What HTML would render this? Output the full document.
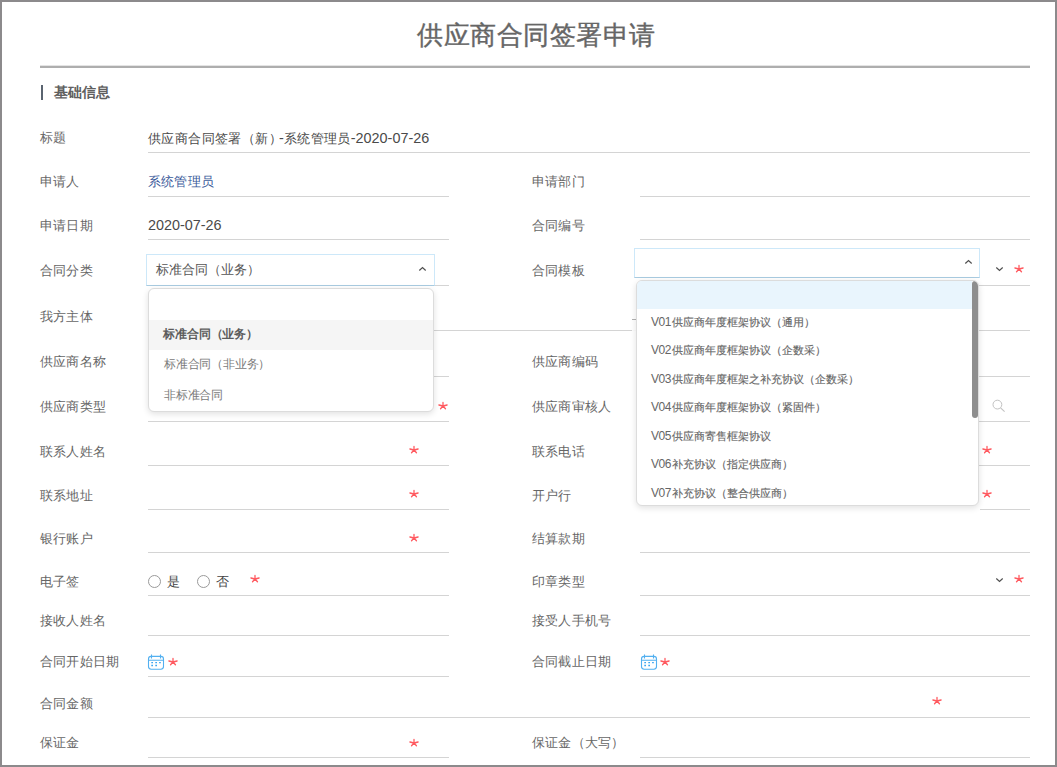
<!DOCTYPE html>
<html><head><meta charset="utf-8">
<style>
*{margin:0;padding:0;box-sizing:border-box}
html,body{width:1057px;height:767px;overflow:hidden;background:#fff;font-family:"Liberation Sans",sans-serif}
#frame{position:absolute;left:0;top:0;width:1057px;height:767px;border:2px solid #8c8a8c;z-index:50;pointer-events:none}
.a{position:absolute;white-space:nowrap}
.title{left:417px;top:18px;font-size:26px;color:#666;line-height:34px;letter-spacing:0.5px;-webkit-text-stroke:0.4px #666}
.hr{position:absolute;left:40px;width:990px;top:66px;height:2px;background:#aeaeae;box-shadow:0 -1px 0 #e4e4e4}
.sec{left:54px;top:83px;font-size:14px;font-weight:bold;color:#606060;line-height:18px}
.bar{position:absolute;left:41px;top:85px;width:2px;height:15px;background:#5a6470}
.lab{font-size:13px;color:#666;line-height:16px;letter-spacing:0.2px}
.val{font-size:13px;letter-spacing:0.4px;color:#4a4a4a;line-height:16px}
.en{font-size:14.4px;letter-spacing:0}
.ln{position:absolute;height:1px;background:#d4d4d4}
.st,.ic{position:absolute;display:block}
.sel{position:absolute;border:1px solid #cde8f9;border-bottom-color:#a9cbe0;background:#fff}
.dd{position:absolute;background:#fff;border:1px solid #dcdcdc;border-radius:6px;box-shadow:0 2px 6px rgba(0,0,0,0.12);overflow:hidden}
.it{position:absolute;white-space:nowrap;font-size:12px;color:#7a7a7a;line-height:14px;letter-spacing:-0.2px}
.it2{position:absolute;white-space:nowrap;font-size:11px;letter-spacing:-0.05px;color:#666;line-height:14px;-webkit-text-stroke:0.15px #666}
.it2 b{font-weight:normal;font-size:12px;letter-spacing:-0.5px;margin-right:1.5px;-webkit-text-stroke:0}
.radio{position:absolute;width:13px;height:13px;border:1px solid #9a9a9a;border-radius:50%}
</style></head><body>
<div id="frame"></div>
<div class="a title">供应商合同签署申请</div>
<div class="hr"></div>
<div class="bar"></div>
<div class="a sec">基础信息</div>
<div class="a lab" style="left:40px;top:130px">标题</div>
<div class="ln" style="left:148px;width:882px;top:152px"></div>
<div class="a lab" style="left:40px;top:174px">申请人</div>
<div class="ln" style="left:148px;width:301px;top:196px"></div>
<div class="a lab" style="left:532px;top:174px">申请部门</div>
<div class="ln" style="left:640px;width:390px;top:196px"></div>
<div class="a lab" style="left:40px;top:218px">申请日期</div>
<div class="ln" style="left:148px;width:301px;top:239px"></div>
<div class="a lab" style="left:532px;top:218px">合同编号</div>
<div class="ln" style="left:640px;width:390px;top:239px"></div>
<div class="a lab" style="left:40px;top:263px">合同分类</div>
<div class="ln" style="left:148px;width:301px;top:285px"></div>
<div class="a lab" style="left:532px;top:263px">合同模板</div>
<div class="ln" style="left:640px;width:390px;top:285px"></div>
<div class="a lab" style="left:40px;top:309px">我方主体</div>
<div class="ln" style="left:148px;width:882px;top:330px"></div>
<div class="a lab" style="left:40px;top:354px">供应商名称</div>
<div class="ln" style="left:148px;width:301px;top:376px"></div>
<div class="a lab" style="left:532px;top:354px">供应商编码</div>
<div class="ln" style="left:640px;width:390px;top:376px"></div>
<div class="a lab" style="left:40px;top:399px">供应商类型</div>
<div class="ln" style="left:148px;width:301px;top:421px"></div>
<div class="a lab" style="left:532px;top:399px">供应商审核人</div>
<div class="ln" style="left:640px;width:390px;top:421px"></div>
<div class="a lab" style="left:40px;top:444px">联系人姓名</div>
<div class="ln" style="left:148px;width:301px;top:465px"></div>
<div class="a lab" style="left:532px;top:444px">联系电话</div>
<div class="ln" style="left:640px;width:390px;top:465px"></div>
<div class="a lab" style="left:40px;top:488px">联系地址</div>
<div class="ln" style="left:148px;width:301px;top:509px"></div>
<div class="a lab" style="left:532px;top:488px">开户行</div>
<div class="ln" style="left:980px;width:50px;top:509px"></div>
<div class="a lab" style="left:40px;top:531px">银行账户</div>
<div class="ln" style="left:148px;width:301px;top:552px"></div>
<div class="a lab" style="left:532px;top:531px">结算款期</div>
<div class="ln" style="left:640px;width:390px;top:552px"></div>
<div class="a lab" style="left:40px;top:574px">电子签</div>
<div class="ln" style="left:148px;width:301px;top:595px"></div>
<div class="a lab" style="left:532px;top:574px">印章类型</div>
<div class="ln" style="left:640px;width:390px;top:595px"></div>
<div class="a lab" style="left:40px;top:613px">接收人姓名</div>
<div class="ln" style="left:148px;width:301px;top:635px"></div>
<div class="a lab" style="left:532px;top:613px">接受人手机号</div>
<div class="ln" style="left:640px;width:390px;top:635px"></div>
<div class="a lab" style="left:40px;top:654px">合同开始日期</div>
<div class="ln" style="left:148px;width:301px;top:676px"></div>
<div class="a lab" style="left:532px;top:654px">合同截止日期</div>
<div class="ln" style="left:640px;width:390px;top:676px"></div>
<div class="a lab" style="left:40px;top:696px">合同金额</div>
<div class="ln" style="left:148px;width:882px;top:717px"></div>
<div class="a lab" style="left:40px;top:735px">保证金</div>
<div class="ln" style="left:148px;width:301px;top:757px"></div>
<div class="a lab" style="left:532px;top:735px">保证金（大写）</div>
<div class="ln" style="left:640px;width:390px;top:757px"></div>
<div class="a val" style="left:148px;top:130px">供应商合同签署（新）<span class="en" style="margin-left:-3px">-</span>系统管理员<span class="en">-2020-07-26</span></div>
<div class="a val" style="left:148px;top:174px;color:#3a5a9a;letter-spacing:0.2px">系统管理员</div>
<div class="a val" style="left:148px;top:217px"><span class="en">2020-07-26</span></div>
<div class="radio" style="left:147.5px;top:574.6px"></div><div class="radio" style="left:197px;top:574.6px"></div>
<div class="a val" style="left:167px;top:574px;color:#444">是</div>
<div class="a val" style="left:216px;top:574px;color:#444">否</div>
<svg class="ic" style="left:147px;top:654px" width="18" height="17" viewBox="0 0 18 17"><rect x="1.5" y="2.4" width="15" height="12.8" rx="2.6" stroke="#52b0f0" stroke-width="1.1" fill="none"/><path d="M1.5 6.2H16.5M4.5 0.6V4.4M13.5 0.6V4.4" stroke="#52b0f0" stroke-width="1.1" fill="none"/><path d="M4.3 8.7h1.7M8.3 8.7h1.7M12.1 8.7h1.7M4.3 11.5h1.7M8.3 11.5h1.7" stroke="#3aa6f0" stroke-width="1.3" fill="none"/></svg><svg class="ic" style="left:640px;top:654px" width="18" height="17" viewBox="0 0 18 17"><rect x="1.5" y="2.4" width="15" height="12.8" rx="2.6" stroke="#52b0f0" stroke-width="1.1" fill="none"/><path d="M1.5 6.2H16.5M4.5 0.6V4.4M13.5 0.6V4.4" stroke="#52b0f0" stroke-width="1.1" fill="none"/><path d="M4.3 8.7h1.7M8.3 8.7h1.7M12.1 8.7h1.7M4.3 11.5h1.7M8.3 11.5h1.7" stroke="#3aa6f0" stroke-width="1.3" fill="none"/></svg>
<svg class="ic" style="left:992px;top:398.5px" width="14" height="14" viewBox="0 0 14 14"><circle cx="5.4" cy="5.6" r="4.4" stroke="#c2c2c2" stroke-width="1" fill="none"/><path d="M8.6 8.8L12.6 12.6" stroke="#c2c2c2" stroke-width="1.1" fill="none"/></svg>
<svg class="ic" style="left:995px;top:266px" width="9" height="6" viewBox="0 0 9 6"><path d="M1.3 1.5L4.5 4.5L7.7 1.5" stroke="#505050" stroke-width="1.2" fill="none"/></svg>
<svg class="ic" style="left:995px;top:577px" width="9" height="6" viewBox="0 0 9 6"><path d="M1.3 1.5L4.5 4.5L7.7 1.5" stroke="#505050" stroke-width="1.2" fill="none"/></svg>
<svg class="st" style="left:438px;top:400.5px" width="10" height="10" viewBox="0 0 10 10"><path d="M5 5V1.4M5 5L9.1 4M5 5L7.45 7.8M5 5L2.55 7.8M5 5L0.9 4" stroke="#ff5a60" stroke-width="1.3" stroke-linecap="round" fill="none"/></svg>
<svg class="st" style="left:409px;top:445px" width="10" height="10" viewBox="0 0 10 10"><path d="M5 5V1.4M5 5L9.1 4M5 5L7.45 7.8M5 5L2.55 7.8M5 5L0.9 4" stroke="#ff5a60" stroke-width="1.3" stroke-linecap="round" fill="none"/></svg>
<svg class="st" style="left:982px;top:445px" width="10" height="10" viewBox="0 0 10 10"><path d="M5 5V1.4M5 5L9.1 4M5 5L7.45 7.8M5 5L2.55 7.8M5 5L0.9 4" stroke="#ff5a60" stroke-width="1.3" stroke-linecap="round" fill="none"/></svg>
<svg class="st" style="left:409px;top:489px" width="10" height="10" viewBox="0 0 10 10"><path d="M5 5V1.4M5 5L9.1 4M5 5L7.45 7.8M5 5L2.55 7.8M5 5L0.9 4" stroke="#ff5a60" stroke-width="1.3" stroke-linecap="round" fill="none"/></svg>
<svg class="st" style="left:982px;top:489px" width="10" height="10" viewBox="0 0 10 10"><path d="M5 5V1.4M5 5L9.1 4M5 5L7.45 7.8M5 5L2.55 7.8M5 5L0.9 4" stroke="#ff5a60" stroke-width="1.3" stroke-linecap="round" fill="none"/></svg>
<svg class="st" style="left:409px;top:533px" width="10" height="10" viewBox="0 0 10 10"><path d="M5 5V1.4M5 5L9.1 4M5 5L7.45 7.8M5 5L2.55 7.8M5 5L0.9 4" stroke="#ff5a60" stroke-width="1.3" stroke-linecap="round" fill="none"/></svg>
<svg class="st" style="left:250px;top:574.2px" width="10" height="10" viewBox="0 0 10 10"><path d="M5 5V1.4M5 5L9.1 4M5 5L7.45 7.8M5 5L2.55 7.8M5 5L0.9 4" stroke="#ff5a60" stroke-width="1.3" stroke-linecap="round" fill="none"/></svg>
<svg class="st" style="left:1014.3px;top:574.4px" width="10" height="10" viewBox="0 0 10 10"><path d="M5 5V1.4M5 5L9.1 4M5 5L7.45 7.8M5 5L2.55 7.8M5 5L0.9 4" stroke="#ff5a60" stroke-width="1.3" stroke-linecap="round" fill="none"/></svg>
<svg class="st" style="left:168px;top:657.3px" width="10" height="10" viewBox="0 0 10 10"><path d="M5 5V1.4M5 5L9.1 4M5 5L7.45 7.8M5 5L2.55 7.8M5 5L0.9 4" stroke="#ff5a60" stroke-width="1.3" stroke-linecap="round" fill="none"/></svg>
<svg class="st" style="left:660px;top:657.3px" width="10" height="10" viewBox="0 0 10 10"><path d="M5 5V1.4M5 5L9.1 4M5 5L7.45 7.8M5 5L2.55 7.8M5 5L0.9 4" stroke="#ff5a60" stroke-width="1.3" stroke-linecap="round" fill="none"/></svg>
<svg class="st" style="left:932px;top:696.3px" width="10" height="10" viewBox="0 0 10 10"><path d="M5 5V1.4M5 5L9.1 4M5 5L7.45 7.8M5 5L2.55 7.8M5 5L0.9 4" stroke="#ff5a60" stroke-width="1.3" stroke-linecap="round" fill="none"/></svg>
<svg class="st" style="left:409px;top:738px" width="10" height="10" viewBox="0 0 10 10"><path d="M5 5V1.4M5 5L9.1 4M5 5L7.45 7.8M5 5L2.55 7.8M5 5L0.9 4" stroke="#ff5a60" stroke-width="1.3" stroke-linecap="round" fill="none"/></svg>
<svg class="st" style="left:1014.2px;top:263.8px" width="10" height="10" viewBox="0 0 10 10"><path d="M5 5V1.4M5 5L9.1 4M5 5L7.45 7.8M5 5L2.55 7.8M5 5L0.9 4" stroke="#ff5a60" stroke-width="1.3" stroke-linecap="round" fill="none"/></svg>

<!-- select 1 -->
<div class="sel" style="left:146px;top:254px;width:289px;height:32px"></div>
<div class="a val" style="left:156px;top:262px;color:#555;letter-spacing:0">标准合同（业务）</div>
<svg class="ic" style="left:418px;top:266px" width="9" height="6" viewBox="0 0 9 6"><path d="M1.3 4.5L4.5 1.5L7.7 4.5" stroke="#505050" stroke-width="1.2" fill="none"/></svg>
<!-- dropdown 1 -->
<div class="dd" style="left:148px;top:288px;width:286px;height:124px">
  <div style="position:absolute;left:0;top:31px;width:100%;height:30px;background:#f5f5f5"></div>
</div>
<div class="it" style="left:163.4px;top:327px;font-weight:bold;color:#5c5c5c">标准合同（业务）</div>
<div class="it" style="left:164px;top:357px">标准合同（非业务）</div>
<div class="it" style="left:164px;top:388px">非标准合同</div>

<!-- select 2 -->
<div class="sel" style="left:634px;top:248px;width:346px;height:30px"></div>
<svg class="ic" style="left:964px;top:259px" width="9" height="6" viewBox="0 0 9 6"><path d="M1.3 4.5L4.5 1.5L7.7 4.5" stroke="#505050" stroke-width="1.2" fill="none"/></svg>
<!-- dropdown 2 -->
<div style="position:absolute;left:632px;top:330px;width:5px;height:1px;background:#fbfbfb"></div>
<div style="position:absolute;left:632px;top:319px;width:4px;height:1px;background:#b0b0b0"></div>
<div class="dd" style="left:636px;top:280px;width:343px;height:226px">
  <div style="position:absolute;left:0;top:0;width:335px;height:28px;background:#e9f5fd"></div>
  <div style="position:absolute;left:335px;top:0px;width:6px;height:137px;background:#8e8e8e;border-radius:3px"></div>
</div>
<div class="it2" style="left:651px;top:315px"><b>V01</b>供应商年度框架协议（通用）</div>
<div class="it2" style="left:651px;top:343px"><b>V02</b>供应商年度框架协议（企数采）</div>
<div class="it2" style="left:651px;top:372px"><b>V03</b>供应商年度框架之补充协议（企数采）</div>
<div class="it2" style="left:651px;top:400px"><b>V04</b>供应商年度框架协议（紧固件）</div>
<div class="it2" style="left:651px;top:429px"><b>V05</b>供应商寄售框架协议</div>
<div class="it2" style="left:651px;top:457px"><b>V06</b>补充协议（指定供应商）</div>
<div class="it2" style="left:651px;top:486px"><b>V07</b>补充协议（整合供应商）</div>
</body></html>
